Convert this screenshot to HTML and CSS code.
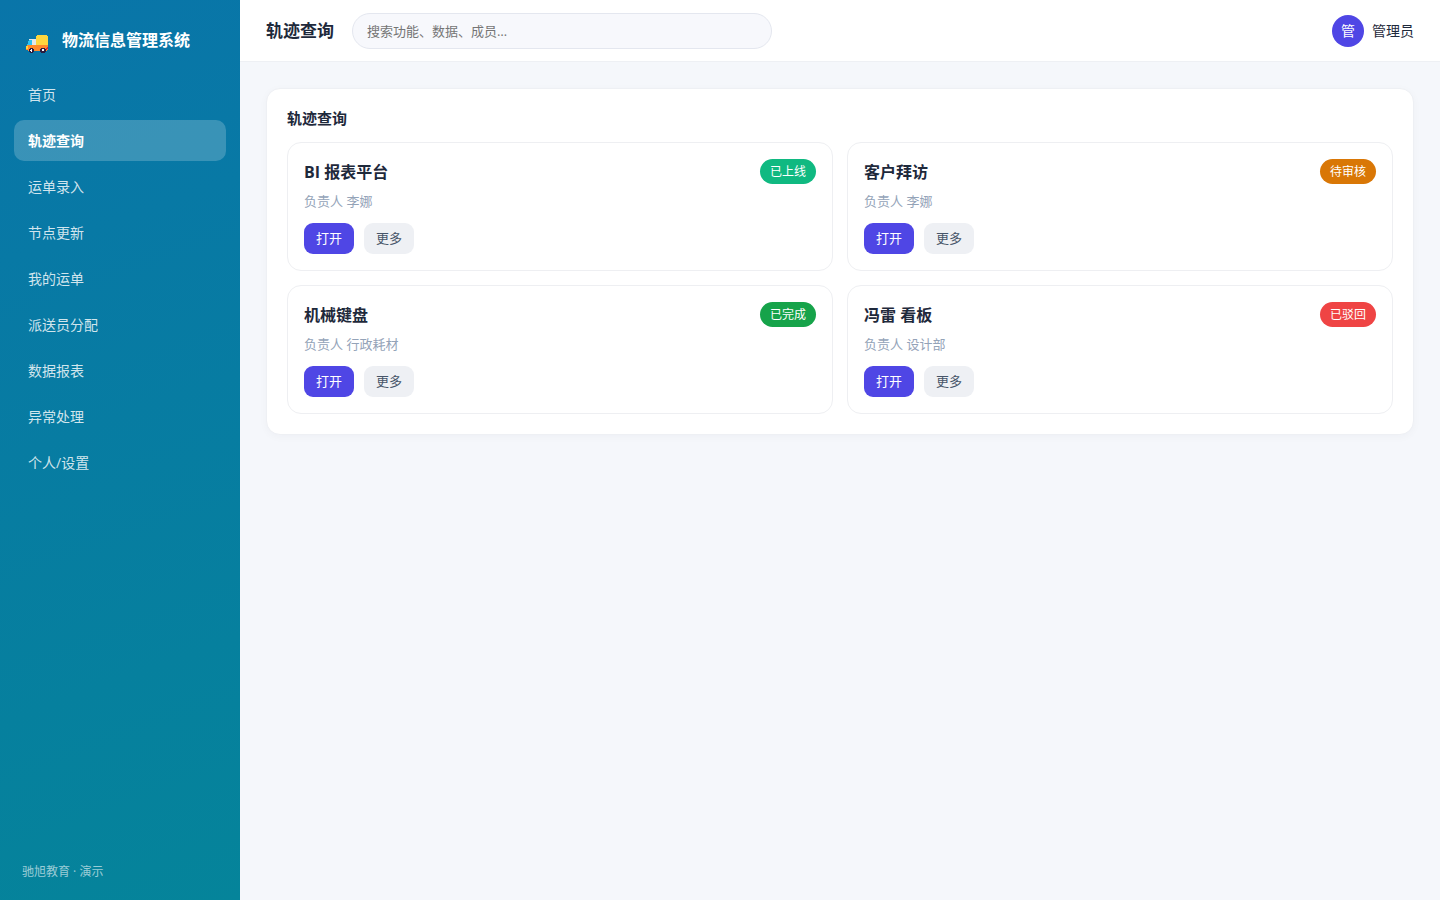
FILE: index.html
```html
<!DOCTYPE html>
<html lang="zh-CN">
<head>
  <meta charset="UTF-8">
  <meta name="viewport" content="width=device-width, initial-scale=1.0">
  <title>轨迹查询 - 物流信息管理系统</title>
  <link rel="stylesheet" href="styles.css">
</head>
<body>
  <aside class="sidebar">
    <div class="brand">
      <svg class="brand-icon" viewBox="0 0 23 18" shape-rendering="crispEdges" aria-hidden="true">
        <path fill="#fdd63f" d="M11 0h10v1h1v9H10V1h1z"/>
        <path fill="#e3e7ea" d="M3 4h7v6H6V5H3z"/>
        <path fill="#29c3f6" d="M3 5h3v5H1V9h1V6h1z"/>
        <path fill="#ff8a2b" d="M1 10h21v5h-1v1H2v-1H0v-4h1z"/>
        <path fill="#fdd63f" d="M0 11h2v3H0z"/>
        <path fill="#e0243c" d="M21 12h1v2h-1v1h-1v-2h1z"/>
        <path fill="#2b1b3d" d="M4 13h3v1h1v3H7v1H4v-1H3v-3h1zM15 13h4v1h1v3h-1v1h-4v-1h-1v-3h1z"/>
        <path fill="#fff" d="M5 14h1v3H5v-1H4v-1h1zM16 14h2v2h-2z"/>
      </svg>
      <span>物流信息管理系统</span>
    </div>
    <nav class="menu">
      <a href="#">首页</a>
      <a href="#" class="active">轨迹查询</a>
      <a href="#">运单录入</a>
      <a href="#">节点更新</a>
      <a href="#">我的运单</a>
      <a href="#">派送员分配</a>
      <a href="#">数据报表</a>
      <a href="#">异常处理</a>
      <a href="#">个人/设置</a>
    </nav>
    <div class="side-foot">驰旭教育 · 演示</div>
  </aside>

  <div class="main">
    <header class="topbar">
      <h1>轨迹查询</h1>
      <input class="search" type="text" aria-label="搜索" placeholder="搜索功能、数据、成员…">
      <div class="user">
        <span class="avatar">管</span>
        <span>管理员</span>
      </div>
    </header>

    <main class="content">
      <section class="panel">
        <h2>轨迹查询</h2>
        <div class="grid">
          <article class="card">
            <div class="card-head">
              <h3>BI 报表平台</h3>
              <span class="badge online">已上线</span>
            </div>
            <p>负责人 李娜</p>
            <div class="actions">
              <button type="button" class="btn primary">打开</button>
              <button type="button" class="btn">更多</button>
            </div>
          </article>
          <article class="card">
            <div class="card-head">
              <h3>客户拜访</h3>
              <span class="badge pending">待审核</span>
            </div>
            <p>负责人 李娜</p>
            <div class="actions">
              <button type="button" class="btn primary">打开</button>
              <button type="button" class="btn">更多</button>
            </div>
          </article>
          <article class="card">
            <div class="card-head">
              <h3>机械键盘</h3>
              <span class="badge done">已完成</span>
            </div>
            <p>负责人 行政耗材</p>
            <div class="actions">
              <button type="button" class="btn primary">打开</button>
              <button type="button" class="btn">更多</button>
            </div>
          </article>
          <article class="card">
            <div class="card-head">
              <h3>冯雷 看板</h3>
              <span class="badge rejected">已驳回</span>
            </div>
            <p>负责人 设计部</p>
            <div class="actions">
              <button type="button" class="btn primary">打开</button>
              <button type="button" class="btn">更多</button>
            </div>
          </article>
        </div>
      </section>
    </main>
  </div>
</body>
</html>
```

FILE: styles.css
```css
* {
  box-sizing: border-box;
  margin: 0;
  padding: 0;
}

body {
  display: flex;
  min-height: 100vh;
  font-family: "Open Sans", "Noto Sans CJK SC", sans-serif;
  font-size: 14px;
  line-height: 19px;
  color: #1e293b;
  background: #f5f7fb;
}

button,
input {
  font-family: inherit;
}

/* sidebar */
.sidebar {
  display: flex;
  flex-direction: column;
  flex: 0 0 240px;
  padding: 22px 14px 19px;
  color: #fff;
  background: linear-gradient(160deg, #0975a9, #05849a);
}

.brand {
  display: flex;
  align-items: center;
  gap: 13px;
  padding: 5px 12px 21px;
  font-size: 16px;
  font-weight: 700;
  line-height: 24px;
}

.brand-icon {
  width: 23px;
  height: 18px;
  margin-top: 8px;
}

.menu {
  display: flex;
  flex-direction: column;
  gap: 5px;
}

.menu a {
  padding: 11px 14px;
  border-radius: 10px;
  color: rgba(255, 255, 255, 0.82);
  text-decoration: none;
}

.menu a.active {
  color: #fff;
  font-weight: 700;
  background: rgba(255, 255, 255, 0.2);
}

.side-foot {
  margin-top: auto;
  padding: 0 8px;
  font-size: 12px;
  color: rgba(255, 255, 255, 0.6);
}

/* top bar */
.main {
  flex: 1;
  min-width: 0;
}

.topbar {
  display: flex;
  align-items: center;
  gap: 18px;
  height: 62px;
  padding: 0 26px;
  background: #fff;
  border-bottom: 1px solid #eef0f4;
}

.topbar h1 {
  font-size: 17px;
  line-height: 24px;
}

.search {
  width: 420px;
  height: 36px;
  padding: 0 14px;
  font-size: 13px;
  background: #f7f8fc;
  border: 1px solid #e4e7ef;
  border-radius: 18px;
  outline: none;
}

.search::placeholder {
  color: #757575;
}

.user {
  display: flex;
  align-items: center;
  gap: 8px;
  margin-left: auto;
}

.avatar {
  width: 32px;
  height: 32px;
  line-height: 32px;
  text-align: center;
  color: #fff;
  background: #4f46e5;
  border-radius: 50%;
}

/* content */
.content {
  padding: 26px;
}

.panel {
  padding: 20px;
  background: #fff;
  border: 1px solid #eef0f4;
  border-radius: 14px;
  box-shadow: 0 2px 8px rgba(30, 41, 59, 0.03);
}

.panel h2 {
  margin-bottom: 14px;
  font-size: 15px;
  line-height: 19px;
}

.grid {
  display: grid;
  grid-template-columns: 1fr 1fr;
  gap: 14px;
}

.card {
  padding: 16px;
  border: 1px solid #eeeff2;
  border-radius: 14px;
}

.card-head {
  display: flex;
  align-items: center;
  justify-content: space-between;
}

.card h3 {
  font-size: 16px;
  line-height: 24px;
}

.card p {
  margin: 8px 0 12px;
  font-size: 13px;
  color: #94a3b8;
}

.badge {
  padding: 4px 10px;
  font-size: 12px;
  line-height: 17px;
  color: #fff;
  border-radius: 13px;
}

.online {
  background: #10b981;
}

.pending {
  background: #d97706;
}

.done {
  background: #16a34a;
}

.rejected {
  background: #ef4444;
}

.actions {
  display: flex;
  gap: 10px;
}

.btn {
  padding: 6px 12px;
  font-size: 13px;
  line-height: 19px;
  color: #475569;
  background: #eef0f4;
  border: none;
  border-radius: 9px;
  cursor: pointer;
}

.btn.primary {
  color: #fff;
  background: #4f46e5;
}
```
